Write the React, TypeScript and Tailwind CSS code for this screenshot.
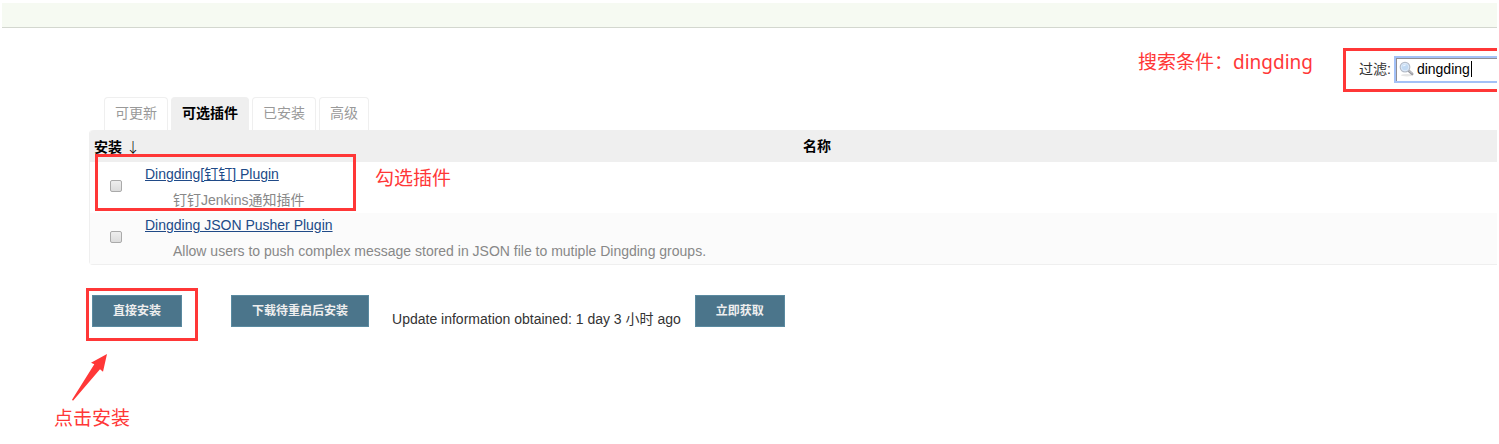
import React from "react";

const cjk = "font-['Liberation_Sans','Noto_Sans_CJK_SC',sans-serif]";
const note = "font-['Noto_Sans','Noto_Sans_CJK_SC',sans-serif] text-[19px] leading-6 text-[#ff3737] whitespace-nowrap";

function Tab({ label, active = false }: { label: string; active?: boolean }) {
  return (
    <a
      href="#"
      aria-current={active ? "page" : undefined}
      className={
        active
          ? "block rounded-t border border-b-0 border-[#efefef] bg-[#efefef] px-2.5 pt-1.5 pb-2 leading-[18px] font-bold text-black"
          : "block rounded-t border border-b-0 border-[#efefef] bg-white px-2.5 pt-1.5 pb-2 leading-[18px] text-[#999999]"
      }
    >
      {label}
    </a>
  );
}

function ActionButton({ children }: { children: React.ReactNode }) {
  return (
    <button
      type="button"
      className="h-8 border border-[#5a8aa0] bg-[#4b758b] px-5 text-xs leading-[30px] font-bold whitespace-nowrap text-[#eeeeee]"
    >
      {children}
    </button>
  );
}

function PluginRow({
  id,
  name,
  description,
  shaded = false,
  highlighted = false,
}: {
  id: string;
  name: string;
  description: string;
  shaded?: boolean;
  highlighted?: boolean;
}) {
  return (
    <tr className={shaded ? "bg-[#fbfbfb]" : "bg-white"}>
      <td className="relative p-0 pt-[18px] align-top">
        <input
          id={id}
          type="checkbox"
          aria-label={name}
          className="ml-5 block size-3 appearance-none rounded-[2px] border border-[#aaaaaa] bg-linear-to-b from-[#eeeeee] to-[#dcdcdc] checked:bg-[#4b758b]"
        />
        {highlighted && (
          <span className="pointer-events-none absolute -top-2 left-[5px] z-10 h-[57px] w-[261px] border-3 border-[#ff3737]" />
        )}
      </td>
      <td className="relative p-0 pl-2">
        <div className="h-[25px] leading-6">
          <a href="#" className="text-[#204a87] underline">
            {name}
          </a>
        </div>
        <div className="h-[26px] pl-7 leading-[26px] text-[#888888]">{description}</div>
        {highlighted && <span className={`absolute top-1 left-[238px] ${note}`}>勾选插件</span>}
      </td>
    </tr>
  );
}

function SearchIcon() {
  return (
    <svg viewBox="0 0 16 16" className="size-4 shrink-0" aria-hidden="true">
      <ellipse cx="8" cy="14.2" rx="6" ry="1.3" fill="#e6e6e6" />
      <path d="M9.4 9.5 L13.2 12.9" stroke="#96969c" strokeWidth="2.6" strokeLinecap="round" />
      <path d="M10.2 9.8 L13.2 12.4" stroke="#cfcfd4" strokeWidth="1" strokeLinecap="round" />
      <circle cx="6" cy="6.1" r="4.8" fill="#c2daf3" stroke="#b4bcc8" strokeWidth="1.2" />
      <circle cx="6" cy="6.1" r="3.8" fill="none" stroke="#e4eefa" strokeWidth="0.8" />
      <path d="M3.5 5.6 A2.8 2.8 0 0 1 7.4 3.7 Q6.2 5.2 3.5 5.6Z" fill="#eaf4ff" />
    </svg>
  );
}

export default function App() {
  return (
    <div className={`overflow-hidden bg-white px-0.5 pt-[3px] text-sm text-[#333333] ${cjk}`}>
      <header className="h-[25px] border-b border-[#d3d7cf] bg-[#f6faf2]" />

      <div className="mt-5 flex items-start justify-end">
        <span className={`mt-0.5 mr-[30px] ${note}`}>搜索条件：dingding</span>
        <div className="flex h-11 w-[154px] items-start border-3 border-r-0 border-[#ff3737] pt-[5px] pl-[13px]">
          <label htmlFor="filter" className="mr-[3px] leading-[26px] whitespace-nowrap">
            过滤:
          </label>
          <div className="relative flex h-[27px] min-w-0 flex-1 items-start border-2 border-r-0 border-[#a3c1f7] bg-white pt-[3px] pl-[3px] shadow-[inset_1px_1px_0_#8f8f96]">
            <SearchIcon />
            <input
              id="filter"
              type="text"
              defaultValue="dingding"
              className="ml-0.5 h-4 w-full min-w-0 bg-transparent leading-4 text-black outline-none"
            />
            <span className="absolute top-[3px] left-[75px] h-4 w-px bg-black" />
          </div>
        </div>
      </div>

      <main className="pl-[87px]">
        <nav className="mt-[5px] flex gap-[3px] pl-[15px]">
          <Tab label="可更新" />
          <Tab label="可选插件" active />
          <Tab label="已安装" />
          <Tab label="高级" />
        </nav>

        <table className="w-full table-fixed border-separate border-spacing-0 rounded-l border border-t-0 border-r-0 border-[#efefef]">
          <colgroup>
            <col className="w-[47px]" />
            <col />
          </colgroup>
          <thead>
            <tr className="h-8 text-black">
              <th className="rounded-tl bg-[#efefef] p-0 pl-1 text-left whitespace-nowrap">
                安装 <span className="font-['Noto_Sans_CJK_SC'] font-light">↓</span>
              </th>
              <th className="bg-[#efefef] p-0">名称</th>
            </tr>
          </thead>
          <tbody>
            <PluginRow id="dingding" name="Dingding[钉钉] Plugin" description="钉钉Jenkins通知插件" highlighted />
            <PluginRow
              id="dingding-json"
              name="Dingding JSON Pusher Plugin"
              description="Allow users to push complex message stored in JSON file to mutiple Dingding groups."
              shaded
            />
          </tbody>
        </table>

        <div className="mt-[30px] flex items-start pl-[3px]">
          <div className="relative mr-[49px] flex">
            <ActionButton>直接安装</ActionButton>
            <span className="pointer-events-none absolute -top-[7px] -left-1.5 h-[53px] w-28 border-3 border-[#ff3737]" />
          </div>
          <ActionButton>下载待重启后安装</ActionButton>
          <span className="mt-3.5 mr-3.5 ml-[23px] leading-5 whitespace-nowrap">
            Update information obtained: 1 day 3 小时 ago
          </span>
          <ActionButton>立即获取</ActionButton>
        </div>
      </main>

      <div className="mt-[25px] flex flex-col pl-[52px]">
        <svg viewBox="0 0 36 48" className="ml-[17px] h-12 w-9" aria-hidden="true">
          <path d="M36 0 L20 8.7 L23.3 10.3 L1 45.7 L2 46.7 L29 15.3 L32 17.7 Z" fill="#ff3737" />
        </svg>
        <span className={`mt-1 ${note}`}>点击安装</span>
      </div>
    </div>
  );
}
